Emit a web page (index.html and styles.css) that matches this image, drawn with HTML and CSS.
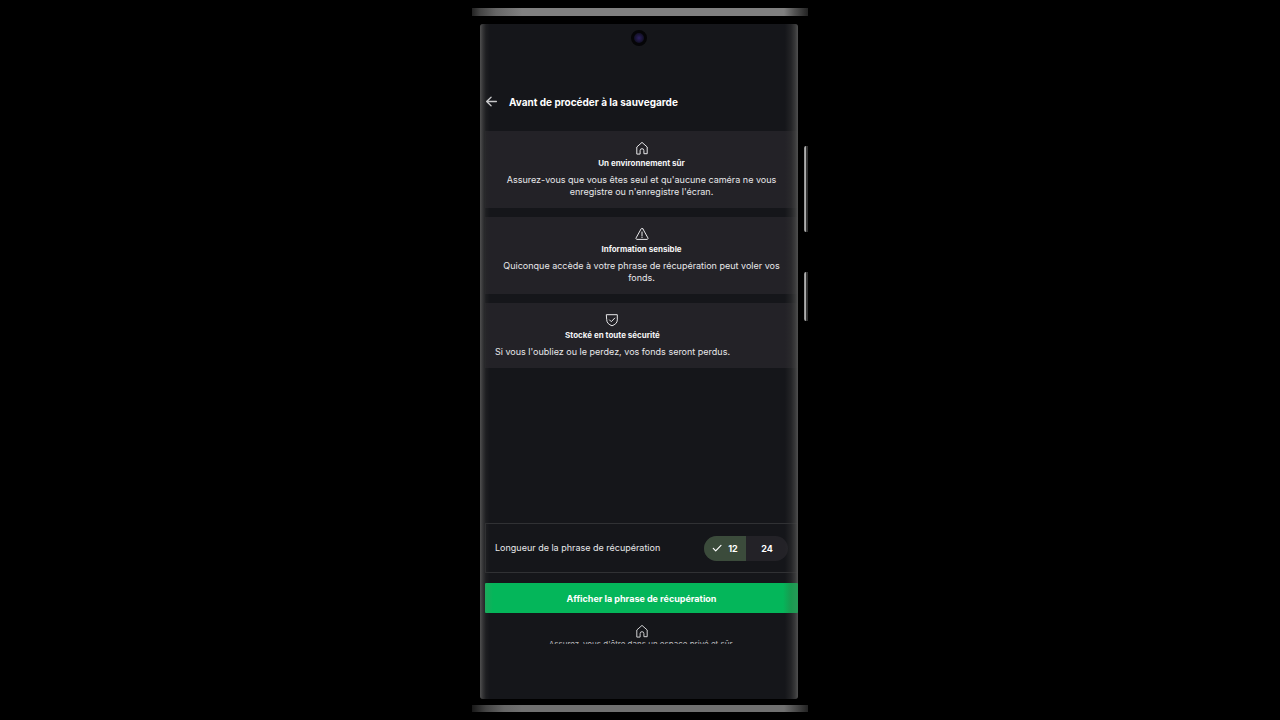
FILE: index.html
```html
<!DOCTYPE html>
<html lang="fr">
<head>
<meta charset="utf-8">
<meta name="viewport" content="width=device-width, initial-scale=1">
<title>Avant de procéder à la sauvegarde</title>
<link rel="stylesheet" href="styles.css">
</head>
<body>
<svg class="defs" aria-hidden="true">
  <symbol id="home" viewBox="0 0 14 14"><path d="M1.800 12.700V6L7 1.400 12.200 6v6.700H8.900V9.600a1.900 1.900 0 0 0-3.800 0v3.100z"/></symbol>
</svg>
<div class="phone">
  <span class="side-key side-key-volume"></span>
  <span class="side-key side-key-power"></span>
  <main class="screen">
    <span class="camera"></span>
    <header class="topbar">
      <button class="back" type="button" aria-label="Retour">
        <svg class="back-icon" viewBox="0 0 12 12"><path d="M10.500 6H1.500M5.600 2L1.500 6l4.100 4"/></svg>
      </button>
      <h1 class="title">Avant de procéder à la sauvegarde</h1>
    </header>
    <div class="cards">
      <section class="card">
        <svg class="icon" aria-hidden="true"><use href="#home"/></svg>
        <h2 class="card-title">Un environnement sûr</h2>
        <p class="card-text">Assurez-vous que vous êtes seul et qu'aucune caméra ne vous enregistre ou n'enregistre l'écran.</p>
      </section>
      <section class="card">
        <svg class="icon" viewBox="0 0 14 14" aria-hidden="true"><path d="M7.9 1.900l5 9a1 1 0 0 1-.9 1.500H2a1 1 0 0 1-.9-1.500l5-9a1 1 0 0 1 1.800 0zM7 5v3.700M7 10v.6"/></svg>
        <h2 class="card-title">Information sensible</h2>
        <p class="card-text">Quiconque accède à votre phrase de récupération peut voler vos fonds.</p>
      </section>
      <section class="card card-start">
        <svg class="icon" viewBox="0 0 14 14" aria-hidden="true"><path d="M1.700 1.700h10.600v5.200c0 3-2.200 4.700-5.300 5.900-3.100-1.200-5.300-2.900-5.300-5.900zM4.500 6.900l1.800 1.800 3.400-3.600"/></svg>
        <h2 class="card-title">Stocké en toute sécurité</h2>
        <p class="card-text">Si vous l'oubliez ou le perdez, vos fonds seront perdus.</p>
      </section>
    </div>
    <div class="length-row">
      <span class="length-label">Longueur de la phrase de récupération</span>
      <div class="segments">
        <button class="segment segment-on" type="button" aria-pressed="true">
          <svg class="check" viewBox="0 0 10 10" aria-hidden="true"><path d="M1.300 5.400l2.400 2.400L9 2.400"/></svg>12</button>
        <button class="segment" type="button" aria-pressed="false">24</button>
      </div>
    </div>
    <button class="primary" type="button">Afficher la phrase de récupération</button>
    <div class="hint">
      <svg class="icon" aria-hidden="true"><use href="#home"/></svg>
      <p class="hint-text">Assurez-vous d'être dans un espace privé et sûr.</p>
    </div>
  </main>
</div>
</body>
</html>
```
FILE: styles.css
```css
* { box-sizing: border-box; }
body {
  margin: 0;
  min-height: 100vh;
  padding: 8px;
  display: flex;
  justify-content: center;
  background: #000;
  color: #e8e8ea;
  font-family: Inter, "Noto Sans", sans-serif;
}
h1, h2, p { margin: 0; }
button { border: 0; padding: 0; background: none; color: inherit; font: inherit; }
svg { fill: none; stroke: currentColor; stroke-linecap: round; stroke-linejoin: round; }
.defs { position: absolute; width: 0; height: 0; }

.phone {
  position: relative;
  width: 100%;
  max-width: 336px;
  padding: 16px 10px 13px 8px;
  display: flex;
  background:
    linear-gradient(90deg, #222 0, #444 8px, #666 24px, #808080 50px, #808080 calc(100% - 24px), #555 calc(100% - 14px), #222) top / 100% 8px no-repeat,
    linear-gradient(90deg, #181818 0, #444 14px, #666 32px, #707070 50px, #707070 calc(100% - 24px), #444 calc(100% - 10px), #222) bottom / 100% 7px no-repeat,
    #000;
}
.side-key {
  position: absolute;
  right: 0;
  width: 4px;
  border-radius: 2px 0 0 2px;
  background: linear-gradient(90deg, #888, #bbb 50%, #333 50%);
}
.side-key-volume { top: 138px; height: 86px; }
.side-key-power { top: 264px; height: 49px; }

.screen {
  position: relative;
  flex: 1;
  min-width: 0;
  padding: 64px 0 55px 5px;
  display: flex;
  flex-direction: column;
  border-radius: 3px;
  overflow: hidden;
  background: #15161a;
}
.screen::after {
  content: "";
  position: absolute;
  inset: 0;
  pointer-events: none;
  background:
    linear-gradient(90deg, #505050 0, #3a3a3bcc 3px, #2a2a2b66 6px, transparent 10px),
    linear-gradient(270deg, #505050 0, #404040cc 3px, #30303188 7px, transparent 13px);
}
.camera {
  position: absolute;
  top: 6px;
  left: 50%;
  width: 16px;
  height: 16px;
  margin-left: -8px;
  border-radius: 50%;
  border: 3px solid #050507;
  background: radial-gradient(circle, #2c2060 0, #15122c 60%, #121220);
}

.topbar { display: flex; align-items: center; gap: 11px; height: 27px; margin-bottom: 16px; }
.back { position: relative; z-index: 1; display: flex; width: 13px; color: #c8c8ca; }
.back-icon { width: 13px; height: 13px; stroke-width: 1.2; }
.title { font-size: 10px; line-height: 14px; font-weight: 700; color: #fff; }

.cards { display: flex; flex-direction: column; gap: 9px; }
.card {
  display: flex;
  flex-direction: column;
  align-items: center;
  padding: 10px;
  background: #232227;
  text-align: center;
}
.card-start {
  display: grid;
  grid-template-columns: max-content;
  justify-items: center;
}
.icon { width: 14px; height: 14px; }
.card-title { margin: 2px 0 5px; font-size: 8px; line-height: 12px; font-weight: 700; color: #f4f4f5; }
.card-text { font-size: 9px; line-height: 12px; }

.length-row {
  display: flex;
  align-items: center;
  justify-content: space-between;
  height: 50px;
  margin-top: auto;
  padding: 0 9px;
  border: 1px solid #303134;
}
.length-label { font-size: 9px; line-height: 12px; }
.segments { display: flex; border-radius: 13px; overflow: hidden; background: #232227; }
.segment {
  display: flex;
  align-items: center;
  justify-content: center;
  gap: 6px;
  width: 42px;
  height: 25px;
  font-size: 9px;
  font-weight: 700;
  color: #fff;
}
.segment-on { background: #3b4b3b; }
.check { width: 10px; height: 10px; stroke-width: 1.2; }

.primary {
  position: relative;
  z-index: 1;
  flex: none;
  height: 30px;
  margin-top: 10px;
  border-radius: 1px;
  background: linear-gradient(90deg, #1eaa5c 0, #04b65a 8px, #04b65a calc(100% - 15px), #199a50 calc(100% - 7px), #279a57);
  color: #fff;
  font-size: 9px;
  font-weight: 700;
}
.hint {
  flex: none;
  display: flex;
  flex-direction: column;
  align-items: center;
  height: 31px;
  padding-top: 11px;
  overflow: hidden;
  color: #d0d0d2;
}
.hint .icon { flex: none; }
.hint-text { font-size: 8px; line-height: 12px; color: #b8b8ba; }
```
